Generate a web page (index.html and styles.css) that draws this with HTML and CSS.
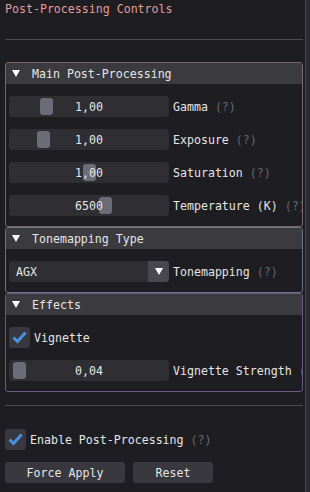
FILE: index.html
```html
<!DOCTYPE html>
<html lang="en">

<head>
  <meta charset="UTF-8">
  <meta name="viewport" content="width=device-width, initial-scale=1.0">
  <title>Post-Processing Controls</title>
  <link rel="stylesheet" href="styles.css">
</head>

<body>
  <div class="window">
    <h1 class="title">Post-Processing Controls</h1>
    <div class="separator"></div>

    <div class="sections">
      <div class="section section-main">
        <div class="section-header">
          <svg class="arrow" width="8" height="7" viewBox="0 0 8 7"><polygon points="0,0 8,0 4,7" fill="#fff"/></svg>
          <span>Main Post-Processing</span>
        </div>
        <div class="section-body">
          <div class="row">
            <div class="slider"><div class="grab" style="left: 31px"></div><span class="value">1,00</span></div>
            <span class="label">Gamma <span class="help">(?)</span></span>
          </div>
          <div class="row">
            <div class="slider"><div class="grab" style="left: 28px"></div><span class="value">1,00</span></div>
            <span class="label">Exposure <span class="help">(?)</span></span>
          </div>
          <div class="row">
            <div class="slider"><div class="grab" style="left: 74px"></div><span class="value">1,00</span></div>
            <span class="label">Saturation <span class="help">(?)</span></span>
          </div>
          <div class="row">
            <div class="slider"><div class="grab" style="left: 90px"></div><span class="value">6500</span></div>
            <span class="label">Temperature (K) <span class="help">(?)</span></span>
          </div>
        </div>
      </div>

      <div class="section section-tone">
        <div class="section-header">
          <svg class="arrow" width="8" height="7" viewBox="0 0 8 7"><polygon points="0,0 8,0 4,7" fill="#fff"/></svg>
          <span>Tonemapping Type</span>
        </div>
        <div class="section-body">
          <div class="row">
            <div class="combo">
              <span class="combo-text">AGX</span>
              <span class="combo-button">
                <svg width="8" height="7" viewBox="0 0 8 7"><polygon points="0,0 8,0 4,7" fill="#fff"/></svg>
              </span>
            </div>
            <span class="label">Tonemapping <span class="help">(?)</span></span>
          </div>
        </div>
      </div>

      <div class="section section-effects">
        <div class="section-header">
          <svg class="arrow" width="8" height="7" viewBox="0 0 8 7"><polygon points="0,0 8,0 4,7" fill="#fff"/></svg>
          <span>Effects</span>
        </div>
        <div class="section-body">
          <div class="row">
            <span class="checkbox">
              <svg width="21" height="21" viewBox="0 0 21 21"><polyline points="4.5,10.5 8.5,14.5 16.5,5.5" fill="none" stroke="#4a90e2" stroke-width="3"/></svg>
            </span>
            <span class="check-label">Vignette</span>
          </div>
          <div class="row">
            <div class="slider"><div class="grab" style="left: 4px"></div><span class="value">0,04</span></div>
            <span class="label">Vignette Strength <span class="help">(?)</span></span>
          </div>
        </div>
      </div>
    </div>

    <div class="separator separator-bottom"></div>

    <div class="row enable-row">
      <span class="checkbox">
        <svg width="21" height="21" viewBox="0 0 21 21"><polyline points="4.5,10.5 8.5,14.5 16.5,5.5" fill="none" stroke="#4a90e2" stroke-width="3"/></svg>
      </span>
      <span class="check-label">Enable Post-Processing <span class="help">(?)</span></span>
    </div>

    <div class="buttons">
      <button class="button button-apply">Force Apply</button>
      <button class="button button-reset">Reset</button>
    </div>
  </div>
  <div class="edge"></div>
</body>
</html>
```

FILE: styles.css
```css
body {
  font-family: "DejaVu Sans Mono", monospace;
  font-size: 11.6px;
  line-height: 14px;
  color: #e6e6e6;
  background-color: #1d1d22;
  margin: 0;
  padding: 0;
  display: flex;
  height: 492px;
  overflow: hidden;
}

.window {
  width: 298px;
  padding: 2px 2px 0 5px;
  border-right: 1px solid #45454c;
  display: flex;
  flex-direction: column;
}

.edge {
  flex: 1;
  background-color: #2a2a30;
}

.title {
  font-size: 11.6px;
  font-weight: normal;
  line-height: 14px;
  margin: 0;
  color: #e79c98;
}

.separator {
  height: 1px;
  background-color: #4b4b52;
  margin-top: 23px;
}

.sections {
  margin-top: 22px;
  display: flex;
  flex-direction: column;
}

.section {
  border: 1px solid #7a6662;
  border-radius: 3px;
  overflow: hidden;
}

.section-tone {
  border-color: #6b7189;
}

.section-effects {
  border-color: #6a5a82;
}

.section-header {
  height: 21px;
  background-color: #3a3a3f;
  display: flex;
  align-items: center;
  white-space: nowrap;
}

.arrow {
  margin: 0 12px 0 6px;
}

.section-body {
  padding: 12px 0 10px 3px;
  display: flex;
  flex-direction: column;
  gap: 12px;
}

.row {
  height: 21px;
  display: flex;
  align-items: center;
  white-space: nowrap;
}

.slider {
  position: relative;
  width: 160px;
  height: 21px;
  background-color: #2e2e33;
  border-radius: 3px;
  display: flex;
  align-items: center;
  justify-content: center;
  flex-shrink: 0;
}

.grab {
  position: absolute;
  top: 2px;
  width: 13px;
  height: 17px;
  border-radius: 3px;
  background-color: #6c6c78;
}

.value {
  position: relative;
}

.label {
  margin-left: 4px;
}

.help {
  color: #696970;
}

.combo {
  width: 160px;
  height: 21px;
  background-color: #2e2e33;
  border-radius: 3px;
  display: flex;
  align-items: center;
  flex-shrink: 0;
}

.combo-text {
  flex: 1;
  padding-left: 7px;
}

.combo-button {
  width: 21px;
  height: 21px;
  background-color: #48484e;
  border-radius: 0 3px 3px 0;
  display: flex;
  align-items: center;
  justify-content: center;
}

.checkbox {
  width: 21px;
  height: 21px;
  background-color: #38383e;
  border-radius: 3px;
  flex-shrink: 0;
}

.checkbox svg {
  display: block;
}

.check-label {
  margin-left: 4px;
}

.separator-bottom {
  margin-top: 13px;
}

.enable-row {
  margin-top: 23px;
}

.buttons {
  margin-top: 12px;
  display: flex;
  gap: 8px;
}

.button {
  height: 21px;
  padding: 0;
  border: none;
  border-radius: 3px;
  background-color: #38383e;
  color: #e6e6e6;
  font-family: "DejaVu Sans Mono", monospace;
  font-size: 11.6px;
}

.button-apply {
  width: 120px;
}

.button-reset {
  width: 80px;
}
```
